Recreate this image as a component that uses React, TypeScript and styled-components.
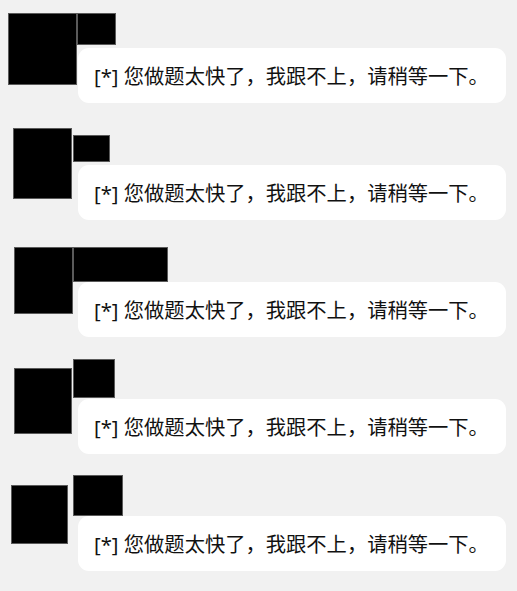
import React from "react";
import styled, { createGlobalStyle } from "styled-components";

const GlobalStyle = createGlobalStyle`
  html, body {
    margin: 0;
    padding: 0;
    background: #f1f1f1;
  }
  body {
    font-family: "Noto Sans", "Noto Sans CJK SC", sans-serif;
  }
`;

const Page = styled.div`
  display: flex;
  flex-direction: column;
  gap: 27px;
  padding: 13px 11px 0 0;
  width: 517px;
  height: 591px;
  box-sizing: border-box;
  overflow: hidden;
`;

const Message = styled.div`
  position: relative;
  display: flex;
  flex-direction: column;
  padding-left: 78px;
  padding-top: 35px;
`;

const Bubble = styled.div`
  height: 55px;
  box-sizing: border-box;
  display: flex;
  align-items: center;
  padding: 1px 14px 0 16px;
  background: #ffffff;
  border-radius: 11px;
  color: #111111;
  font-size: 20.3px;
  line-height: 1;
  white-space: nowrap;
`;

const Redaction = styled.div<{ $x: number; $y: number; $w: number; $h: number }>`
  position: absolute;
  left: ${(p) => p.$x}px;
  top: ${(p) => p.$y}px;
  width: ${(p) => p.$w}px;
  height: ${(p) => p.$h}px;
  box-sizing: border-box;
  background: #000;
  border: 1px solid #5a5a5a;
`;

type Box = [number, number, number, number];

const rows: { avatar: Box; name: Box }[] = [
  { avatar: [8, 0, 69, 72], name: [77, 0, 39, 32] },
  { avatar: [13, -2, 59, 71], name: [73, 5, 37, 27] },
  { avatar: [14, 0, 59, 67], name: [73, 0, 95, 35] },
  { avatar: [14, 4, 58, 66], name: [73, -5, 42, 39] },
  { avatar: [11, 4, 57, 59], name: [73, -6, 50, 41] },
];

export default function App() {
  return (
    <>
      <GlobalStyle />
      <Page>
        {rows.map((r, i) => (
          <Message key={i}>
            <Bubble>[*] 您做题太快了，我跟不上，请稍等一下。</Bubble>
            <Redaction $x={r.avatar[0]} $y={r.avatar[1]} $w={r.avatar[2]} $h={r.avatar[3]} />
            <Redaction $x={r.name[0]} $y={r.name[1]} $w={r.name[2]} $h={r.name[3]} />
          </Message>
        ))}
      </Page>
    </>
  );
}
